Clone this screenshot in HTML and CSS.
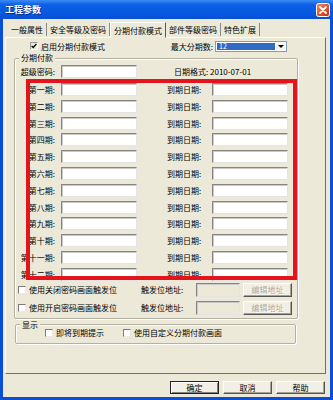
FILE: index.html
```html
<!DOCTYPE html>
<html lang="zh-CN">
<head>
  <meta charset="UTF-8" />
  <title>工程参数</title>
  <link rel="stylesheet" href="styles.css">
</head>
<body>
  <div class="window">
    <div class="titlebar">
      <span class="title">工程参数</span>
      <svg class="close" width="14" height="14" viewBox="0 0 14 14">
        <defs>
          <linearGradient id="cg" x1="0" y1="0" x2="1" y2="1">
            <stop offset="0" stop-color="#f09070"/>
            <stop offset="0.5" stop-color="#e0552c"/>
            <stop offset="1" stop-color="#c23a12"/>
          </linearGradient>
        </defs>
        <rect x="0.5" y="0.5" width="13" height="13" rx="2" fill="url(#cg)" stroke="#fff"/>
        <path d="M4 4 L10 10 M10 4 L4 10" stroke="#fff" stroke-width="1.8" stroke-linecap="round"/>
      </svg>
    </div>

    <div class="frame">
      <div class="tabs">
        <span class="tab first">一般属性</span>
        <span class="tab">安全等级及密码</span>
        <span class="tab active">分期付款模式</span>
        <span class="tab">部件等级密码</span>
        <span class="tab">特色扩展</span>
      </div>

      <div class="panel">
        <div class="toprow">
          <span class="check main">
            <span class="box"><svg width="6" height="6" viewBox="0 0 6 6"><path d="M0.6 2.8 L2.2 4.5 L5.4 1" fill="none" stroke="#000" stroke-width="1.2"/></svg></span>
            启用分期付款模式
          </span>
          <span class="maxlabel">最大分期数:</span>
          <div class="select">
            <span class="sel">12</span>
            <span class="arrow"></span>
          </div>
        </div>

        <div class="group pay">
          <span class="legend">分期付款</span>
          <div class="cols superrow">
            <span class="lbl">超级密码:</span>
            <span class="input"></span>
            <span class="fmt">日期格式: 2010-07-01</span>
          </div>
          <div class="cols periods">
            <span class="lbl">第一期:</span><span class="input"></span><span></span><span class="lbl2">到期日期:</span><span class="input"></span>
            <span class="lbl">第二期:</span><span class="input"></span><span></span><span class="lbl2">到期日期:</span><span class="input"></span>
            <span class="lbl">第三期:</span><span class="input"></span><span></span><span class="lbl2">到期日期:</span><span class="input"></span>
            <span class="lbl">第四期:</span><span class="input"></span><span></span><span class="lbl2">到期日期:</span><span class="input"></span>
            <span class="lbl">第五期:</span><span class="input"></span><span></span><span class="lbl2">到期日期:</span><span class="input"></span>
            <span class="lbl">第六期:</span><span class="input"></span><span></span><span class="lbl2">到期日期:</span><span class="input"></span>
            <span class="lbl">第七期:</span><span class="input"></span><span></span><span class="lbl2">到期日期:</span><span class="input"></span>
            <span class="lbl">第八期:</span><span class="input"></span><span></span><span class="lbl2">到期日期:</span><span class="input"></span>
            <span class="lbl">第九期:</span><span class="input"></span><span></span><span class="lbl2">到期日期:</span><span class="input"></span>
            <span class="lbl">第十期:</span><span class="input"></span><span></span><span class="lbl2">到期日期:</span><span class="input"></span>
            <span class="lbl">第十一期:</span><span class="input"></span><span></span><span class="lbl2">到期日期:</span><span class="input"></span>
            <span class="lbl">第十二期:</span><span class="input"></span><span></span><span class="lbl2">到期日期:</span><span class="input"></span>
          </div>
          <div class="triggers">
            <div class="trow">
              <span class="check"><span class="box"></span>使用关闭密码画面触发位</span>
              <span>触发位地址:</span>
              <span class="input off"></span>
              <span class="btn off">编辑地址</span>
            </div>
            <div class="trow">
              <span class="check"><span class="box"></span>使用开启密码画面触发位</span>
              <span>触发位地址:</span>
              <span class="input off"></span>
              <span class="btn off">编辑地址</span>
            </div>
          </div>
          <div class="mark"></div>
        </div>

        <div class="group show">
          <span class="legend">显示</span>
          <div class="showrow">
            <span class="check"><span class="box"></span>即将到期提示</span>
            <span class="check"><span class="box"></span>使用自定义分期付款画面</span>
          </div>
        </div>
      </div>

      <div class="buttons">
        <span class="btn default">确定</span>
        <span class="btn">取消</span>
        <span class="btn">帮助</span>
      </div>
    </div>
  </div>
</body>
</html>
```

FILE: styles.css
```css
* { box-sizing: border-box; }
body {
  margin: 0;
  font-family: "Noto Sans CJK SC", "Liberation Sans", sans-serif;
  font-size: 8px;
  color: #000;
  background: #fff;
}
.window {
  width: 333px;
  height: 400px;
  display: flex;
  flex-direction: column;
}
.titlebar {
  height: 19px;
  display: flex;
  align-items: center;
  justify-content: space-between;
  padding: 0 3px 0 5px;
  background: linear-gradient(#3b8cf6, #0d5fe6 25%, #0658e2 70%, #0a4fd0);
}
.title {
  color: #fff;
  font-weight: bold;
  font-size: 9px;
  text-shadow: 1px 1px 0 #0a2f8a;
}
.close { display: block; margin-top: 1px; }
.frame {
  flex: 1;
  display: flex;
  flex-direction: column;
  background: #ece9d8;
  border: 3px solid #0b4ed6;
  border-top: none;
  padding: 3px 4px 0 2px;
}

/* tabs */
.tabs {
  height: 15px;
  display: flex;
  align-items: flex-end;
  z-index: 1;
}
.tab {
  height: 13px;
  line-height: 13px;
  padding: 0 3px;
  margin-bottom: 1px;
  border-right: 1px solid #8a8a8a;
  white-space: nowrap;
}
.tab.first { padding-left: 6px; }
.tab.active {
  height: 16px;
  line-height: 15px;
  margin-bottom: -1px;
  background: #ece9d8;
  border: 1px solid;
  border-color: #fff #5a5a5a transparent #fff;
  border-left: 1px solid #fff;
}
.panel {
  height: 337px;
  border: 1px solid;
  border-color: #fff #6f6f6f #6f6f6f #fff;
  display: flex;
  flex-direction: column;
}

/* top row */
.toprow {
  height: 12px;
  margin-top: 2px;
  display: flex;
  align-items: center;
  padding: 0 38px 0 24px;
}
.toprow .main { flex: 1; }
.maxlabel { margin-right: 2px; }
.select {
  width: 72px;
  height: 11px;
  background: #fff;
  border: 1px solid #7f9db9;
  display: flex;
  padding: 1px;
}
.sel {
  flex: 1;
  background: #316ac5;
  color: #fff;
  line-height: 7px;
  padding-left: 2px;
  font-size: 7px;
}
.arrow {
  width: 9px;
  margin-left: 1px;
  background: #f4f4f0;
  display: flex;
  align-items: center;
  justify-content: center;
}
.arrow::after {
  content: "";
  border-left: 3px solid transparent;
  border-right: 3px solid transparent;
  border-top: 3px solid #000;
}

/* checkbox */
.check {
  display: flex;
  align-items: center;
  gap: 3px;
  white-space: nowrap;
}
.box {
  width: 8px;
  height: 8px;
  background: #fff;
  border: 1px solid;
  border-color: #7a7a7a #e8e8e8 #e8e8e8 #7a7a7a;
  display: flex;
  align-items: center;
  justify-content: center;
}
.main .box { background: transparent; border-color: #9a9a9a #fff #fff #9a9a9a; }
.box svg { display: block; }

/* group boxes */
.group {
  border: 1px solid #b4b1a2;
  box-shadow: inset 1px 1px 0 #fff, 1px 1px 0 #fff;
  border-radius: 2px;
}
.legend {
  display: table;
  height: 10px;
  line-height: 10px;
  padding: 0 2px;
  margin-left: 4px;
  background: #ece9d8;
}
.pay {
  position: relative;
  margin: 6px 0 0 8px;
  width: 284px;
  padding-bottom: 3px;
}
.pay .legend { margin-top: -6px; }
.cols {
  display: grid;
  grid-template-columns: 46px 76px 30px 45px 76px;
  align-items: center;
}
.superrow { margin: 2px 0 5px; height: 13px; }
.periods { grid-auto-rows: 13px; row-gap: 3.8px; }
.lbl { text-align: right; padding-right: 6px; white-space: nowrap; }
.lbl2 { white-space: nowrap; }
.fmt { grid-column: 3 / 6; padding-left: 37px; white-space: nowrap; }
.input {
  display: block;
  height: 13px;
  width: 76px;
  background: #fff;
  border: 1px solid;
  border-color: #858585 #e4e4e4 #e4e4e4 #858585;
  box-shadow: inset 1px 1px 0 #c9c9c9;
}
.input.off { width: 44px; height: 14px; background: #ece9d8; }
.triggers {
  margin-top: 2px;
  display: flex;
  flex-direction: column;
  gap: 4px;
}
.trow {
  display: grid;
  grid-template-columns: 123px 55px 47px 49px;
  align-items: center;
  height: 14px;
  padding-left: 3px;
}
.trow .check { margin-left: 0; }
.mark {
  position: absolute;
  left: 11px;
  top: 20px;
  width: 271px;
  height: 201px;
  border: 4px solid #e3141b;
}

.show {
  margin: 5px 0 0 9px;
  width: 281px;
  padding-bottom: 5px;
}
.show .legend { margin-top: -5px; margin-bottom: -2px; }
.showrow {
  height: 10px;
  display: flex;
  align-items: center;
  padding-left: 29px;
  gap: 19px;
}

/* buttons */
.btn {
  display: flex;
  align-items: center;
  justify-content: center;
  width: 49px;
  height: 14px;
  background: #f1efe6;
  border: 1px solid;
  border-color: #fff #555 #555 #fff;
  box-shadow: inset -1px -1px 0 #a5a293;
}
.btn.off {
  color: #aca899;
  text-shadow: 1px 1px 0 #fff;
}
.btn.default {
  border-color: #222;
  box-shadow: inset 1px 1px 0 #fff, inset -1px -1px 0 #808080;
}
.buttons {
  margin-top: 7px;
  height: 13px;
  display: flex;
  justify-content: flex-end;
  gap: 4px;
  padding-right: 1px;
}
.buttons .btn { height: 13px; }
```
